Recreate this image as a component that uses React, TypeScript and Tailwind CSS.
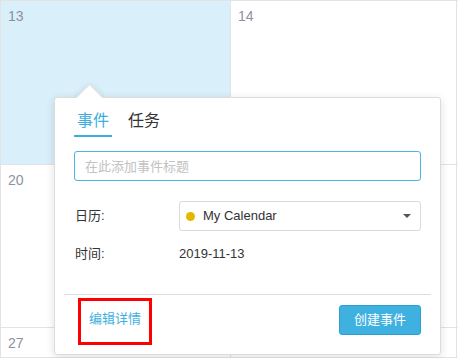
const font = { fontFamily: '"Liberation Sans", "Noto Sans CJK SC", Arial, sans-serif' };

function Cell({ day, active }: { day: string; active?: boolean }) {
  return (
    <div
      className={
        "border-r border-b border-[#e3e3e3] pl-[7px] pt-[5px] text-[14px] leading-[20px] text-[#8c929e] " +
        (active ? "bg-[#d9eff9]" : "bg-white")
      }
    >
      {day}
    </div>
  );
}

function EventPopover() {
  return (
    <div className="absolute left-[54px] top-[97px] w-[387px] h-[258px] bg-white border border-[#dcdcdc] rounded-[3px] shadow-[0_2px_10px_rgba(0,0,0,0.12)]">
      {/* arrow */}
      <div className="absolute left-[19px] top-[-16px] w-[30px] h-[16px] overflow-hidden">
        <div className="absolute left-[4.5px] top-[5.5px] w-[21px] h-[21px] rotate-45 bg-white border border-[#dcdcdc] shadow-[0_0_6px_rgba(0,0,0,0.1)]" />
      </div>

      <div className="px-[19px] pt-[12px]">
        <div className="flex text-[16px] leading-[22px]">
          <div className="px-[3px] pb-[3px] border-b-2 border-[#3eaee0] text-[#3eaee0]">事件</div>
          <div className="ml-[13px] px-[3px] pb-[3px] text-[#333]">任务</div>
        </div>

        <input
          className="mt-[14px] block w-full h-[30px] border border-[#4db3e2] rounded-[3px] pl-[10px] text-[13px] text-[#333] placeholder:text-[#c2c2c2] outline-none"
          placeholder="在此添加事件标题"
        />

        <div className="mt-[20px] flex items-center text-[13px] text-[#333]">
          <div className="w-[105px] pl-[1px]">日历:</div>
          <div className="flex-1 h-[30px] flex items-center border border-[#dadada] rounded-[3px] pl-[6px] pr-[9px]">
            <span className="w-[9px] h-[9px] rounded-full bg-[#e5b800]" />
            <span className="ml-[8px] flex-1">My Calendar</span>
            <svg width="8" height="4" viewBox="0 0 8 4">
              <polygon points="0,0 8,0 4,4" fill="#555" />
            </svg>
          </div>
        </div>

        <div className="mt-[8px] h-[30px] flex items-center text-[13px] text-[#333]">
          <div className="w-[105px] pl-[1px]">时间:</div>
          <div>2019-11-13</div>
        </div>
      </div>

      <div className="mx-[9px] mt-[25px] border-t border-[#dedede]" />

      <div className="px-[19px] flex justify-between items-start">
        <a className="mt-[3px] ml-[4px] h-[47px] border-[3px] border-[#ff0000] px-[8px] pt-[9px] text-[13px] leading-[18px] text-[#3eb0e0] cursor-pointer">
          编辑详情
        </a>
        <button className="mt-[10px] h-[30px] px-[14px] rounded-[3px] bg-[#3fb1e1] border border-[#2e9fd0] text-white text-[13px]">
          创建事件
        </button>
      </div>
    </div>
  );
}

export default function App() {
  return (
    <div className="relative w-[458px] h-[358px] overflow-hidden bg-white" style={font}>
      <div className="grid grid-cols-[230px_226px_1fr] grid-rows-[164px_163px_1fr] h-full border-t border-l border-[#e3e3e3]">
        <Cell day="13" active />
        <Cell day="14" />
        <Cell day="" />
        <Cell day="20" />
        <Cell day="21" />
        <Cell day="" />
        <Cell day="27" />
        <Cell day="28" />
        <Cell day="" />
      </div>
      <EventPopover />
    </div>
  );
}
